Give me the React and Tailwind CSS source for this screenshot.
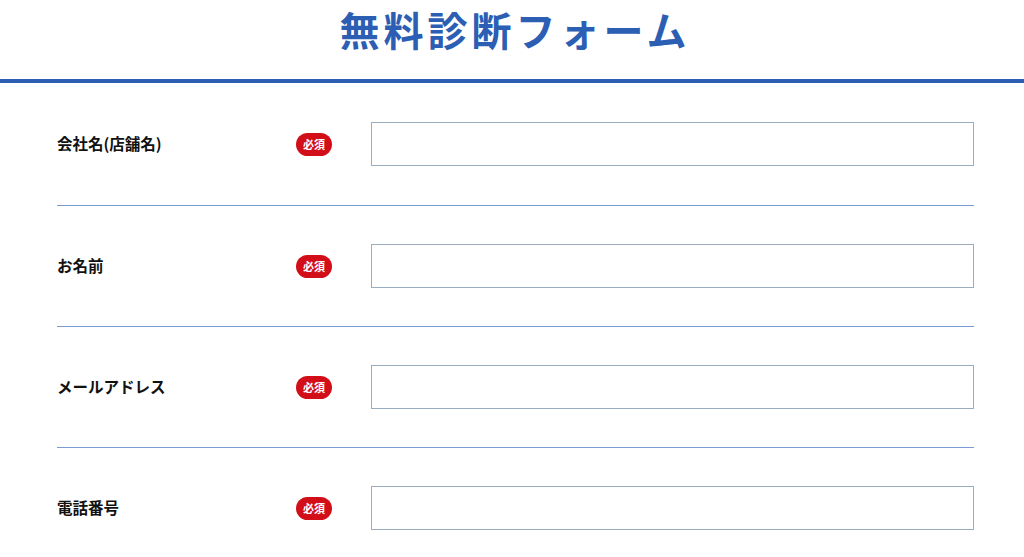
import React from "react";

const rows = ["会社名(店舗名)", "お名前", "メールアドレス", "電話番号"];

export default function App() {
  return (
    <div
      className="w-[1024px] h-[557px] overflow-hidden bg-white"
      style={{ fontFamily: '"Noto Sans CJK JP", "Noto Sans", sans-serif' }}
    >
      <div className="h-[83px] border-b-[4px] border-[#2c5eb4] flex justify-center pt-[3px] pl-[6px]">
        <h1 className="text-[40px] font-bold leading-[52px] tracking-[0.1em] text-[#2c5eb4]">
          無料診断フォーム
        </h1>
      </div>
      <div className="ml-[57px] w-[917px] pt-[1px]">
        {rows.map((r) => (
          <div
            key={r}
            className="flex items-center pt-[38px] pb-[38px] first:pb-[39px] border-b border-[#7b9bd3]"
          >
            <div className="w-[239px] text-[15.5px] font-bold text-[#111] leading-none">{r}</div>
            <span className="w-[36px] h-[23px] rounded-full bg-[#d20f19] text-white text-[11px] font-bold flex items-center justify-center leading-none">
              必須
            </span>
            <input
              type="text"
              className="ml-[39px] flex-1 h-[44px] border border-[#9aacc0] bg-white outline-none"
            />
          </div>
        ))}
      </div>
    </div>
  );
}
